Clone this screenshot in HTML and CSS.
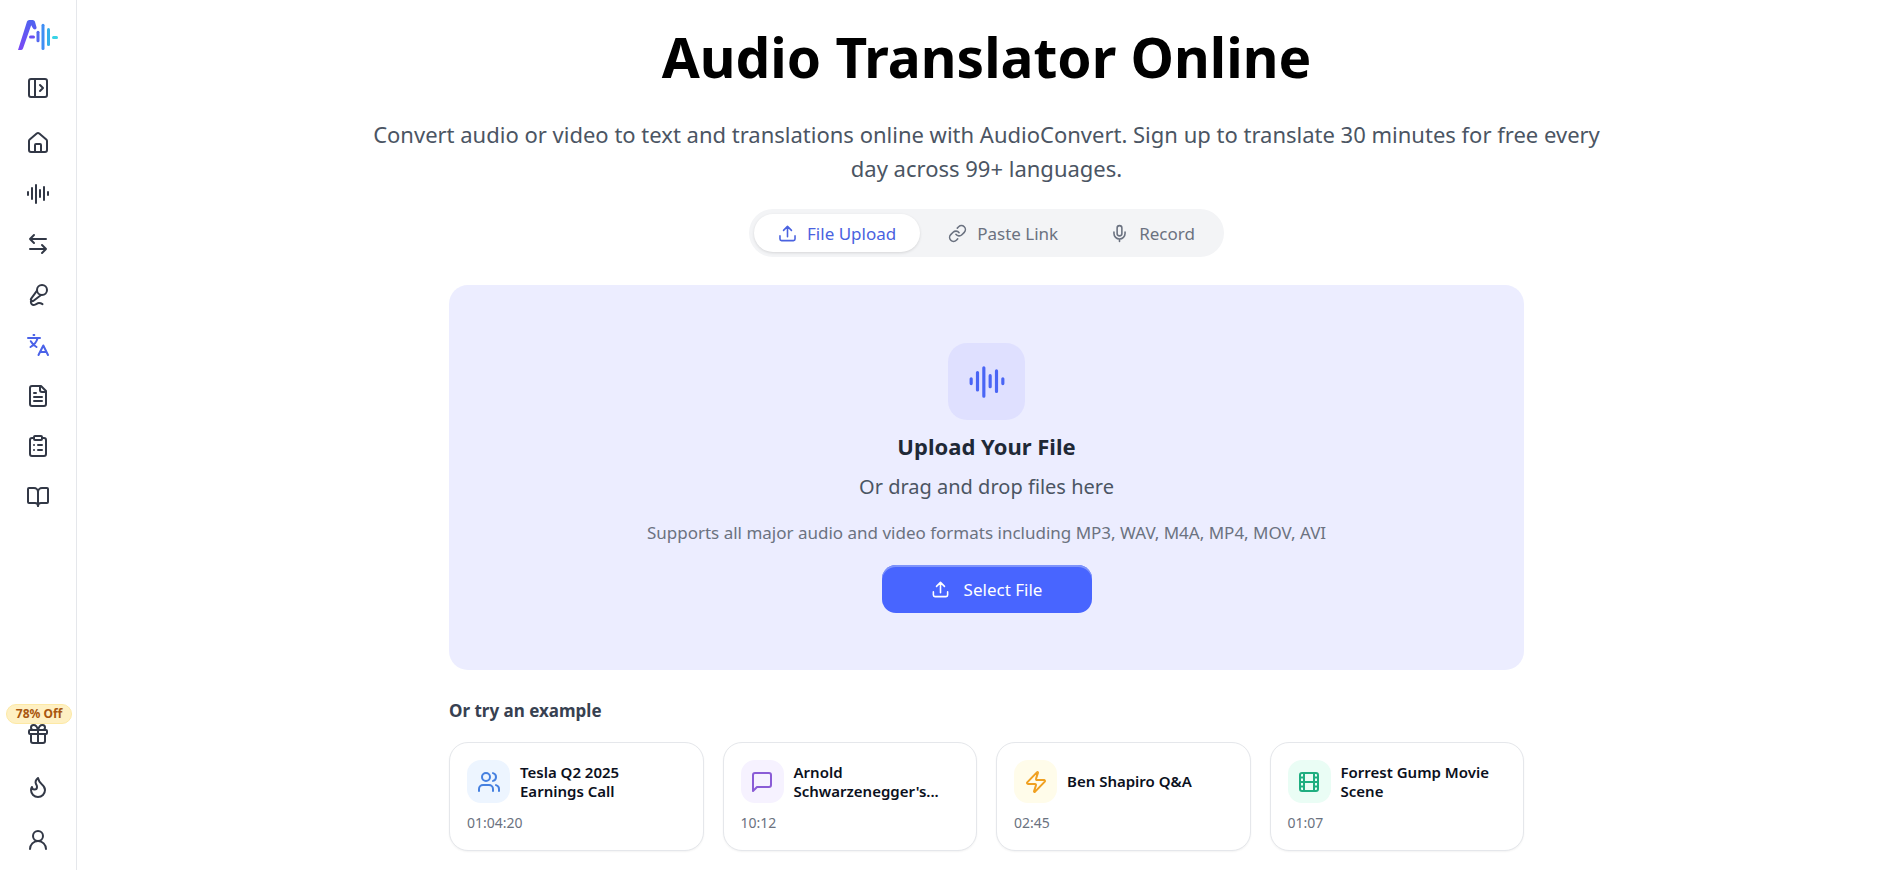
FILE: index.html
```html
<!DOCTYPE html>
<html lang="en">
<head>
<meta charset="utf-8">
<meta name="viewport" content="width=device-width, initial-scale=1">
<title>Audio Translator Online</title>
<link rel="stylesheet" href="styles.css">
</head>
<body>
<div class="app">
  <aside class="sidebar">
    <a class="logo" href="#" aria-label="AudioConvert">
      <svg width="40" height="30" viewBox="0 0 40 30" fill="none" stroke-linecap="round" stroke-linejoin="round">
        <defs>
          <linearGradient id="logo-a" x1="12" y1="0" x2="4" y2="30" gradientUnits="userSpaceOnUse"><stop stop-color="#4f63f0"/><stop offset="1" stop-color="#7a48f5"/></linearGradient>
        </defs>
        <path d="M0 30 9 1.500Q9.600 0 11.200 0H14.800Q16.300 0 16.900 1.600L18.600 7.600Q18.600 9.600 16.800 9.600 15.400 9.600 14.600 7.800L13.200 5.200 5 28.400Q4.400 30 2.800 30Z" fill="url(#logo-a)"/>
        <path d="M12.500 17H15.500" stroke="#6b4ff3" stroke-width="3"/>
        <path d="M20 12.300V20.700" stroke="#5568f0" stroke-width="3"/>
        <path d="M25 5.300V28.500" stroke="#3f8ef4" stroke-width="3"/>
        <path d="M30.500 9.500V24.500" stroke="#35b0ea" stroke-width="3"/>
        <path d="M35.500 17.500H38.500" stroke="#38d3e6" stroke-width="3"/>
      </svg>
    </a>
    <button class="side-btn" type="button" aria-label="Expand sidebar">
      <svg class="icon" viewBox="0 0 24 24"><rect x="3" y="3" width="18" height="18" rx="2"/><path d="M9 3v18"/><path d="m14 9 3 3-3 3"/></svg>
    </button>
    <nav class="nav" aria-label="Tools">
      <a class="side-btn" href="#" aria-label="Home"><svg class="icon" viewBox="0 0 24 24"><path d="M15 21v-7a1 1 0 0 0-1-1h-4a1 1 0 0 0-1 1v7"/><path d="M3 10a2 2 0 0 1 .709-1.528l7-6a2 2 0 0 1 2.582 0l7 6A2 2 0 0 1 21 10v9a2 2 0 0 1-2 2H5a2 2 0 0 1-2-2z"/></svg></a>
      <a class="side-btn" href="#" aria-label="Audio to text"><svg class="icon" viewBox="0 0 24 24"><path d="M2 10v3M6 6v11M10 3v18M14 8v7M18 5v13M22 10v3"/></svg></a>
      <a class="side-btn" href="#" aria-label="Convert"><svg class="icon" viewBox="0 0 24 24"><path d="M8 3 4 7l4 4M4 7h16M16 21l4-4-4-4M20 17H4"/></svg></a>
      <a class="side-btn" href="#" aria-label="Voice"><svg class="icon" viewBox="0 0 24 24"><path d="m11 7.601-5.994 8.190a1 1 0 0 0 .1 1.298l.817.818a1 1 0 0 0 1.314.087L15.090 12"/><path d="M16.500 21.174C15.500 20.500 14.372 20 13 20c-2.058 0-3.928 2.356-6 2-2.072-.356-2.775-3.369-1.500-4.500"/><circle cx="16" cy="7" r="5"/></svg></a>
      <a class="side-btn side-btn-active" href="#" aria-label="Audio translator" aria-current="page"><svg class="icon" viewBox="0 0 24 24" ><path d="M2 5h12M7.500 2h.8M11.500 5.500C10.500 9 8 12 4.500 14M4.800 8.200C6 10.500 8 12.500 10.500 14"/><path d="M12.500 22 17.300 12.500 22 22M14 19h6.500"/></svg></a>
      <a class="side-btn" href="#" aria-label="Transcripts"><svg class="icon" viewBox="0 0 24 24"><path d="M15 2H6a2 2 0 0 0-2 2v16a2 2 0 0 0 2 2h12a2 2 0 0 0 2-2V7Z"/><path d="M14 2v4a2 2 0 0 0 2 2h4M10 9H8M16 13H8M16 17H8"/></svg></a>
      <a class="side-btn" href="#" aria-label="Notes"><svg class="icon" viewBox="0 0 24 24"><rect x="8" y="2" width="8" height="4" rx="1"/><path d="M16 4h2a2 2 0 0 1 2 2v14a2 2 0 0 1-2 2H6a2 2 0 0 1-2-2V6a2 2 0 0 1 2-2h2M12 11h4M12 16h4M8 11h.01M8 16h.01"/></svg></a>
      <a class="side-btn" href="#" aria-label="Guides"><svg class="icon" viewBox="0 0 24 24"><path d="M12 7v14"/><path d="M3 18a1 1 0 0 1-1-1V4a1 1 0 0 1 1-1h5a4 4 0 0 1 4 4 4 4 0 0 1 4-4h5a1 1 0 0 1 1 1v13a1 1 0 0 1-1 1h-6a3 3 0 0 0-3 3 3 3 0 0 0-3-3z"/></svg></a>
    </nav>
    <div class="side-foot">
      <a class="side-btn" href="#">
        <svg class="icon" viewBox="0 0 24 24" aria-hidden="true"><rect x="3" y="8" width="18" height="4" rx="1"/><path d="M12 8v13M19 12v7a2 2 0 0 1-2 2H7a2 2 0 0 1-2-2v-7M7.500 8a2.500 2.500 0 0 1 0-5A4.800 8 0 0 1 12 8a4.800 8 0 0 1 4.500-5 2.500 2.500 0 0 1 0 5"/></svg>
        <span class="badge">78% Off</span>
      </a>
      <a class="side-btn" href="#" aria-label="Popular"><svg class="icon" viewBox="0 0 24 24"><path d="M8.500 14.500A2.500 2.500 0 0 0 11 12c0-1.380-.5-2-1-3-1.072-2.143-.224-4.054 2-6 .5 2.500 2 4.900 4 6.500 2 1.600 3 3.500 3 5.500a7 7 0 1 1-14 0c0-1.153.433-2.294 1-3a2.500 2.500 0 0 0 2.500 2.500z"/></svg></a>
      <a class="side-btn" href="#" aria-label="Account"><svg class="icon" viewBox="0 0 24 24"><circle cx="12" cy="8" r="5"/><path d="M20 21a8 8 0 0 0-16 0"/></svg></a>
    </div>
  </aside>

  <main class="main">
    <h1 class="title">Audio Translator Online</h1>
    <p class="subtitle">Convert audio or video to text and translations online with AudioConvert. Sign up to translate 30 minutes for free every day across 99+ languages.</p>

    <div class="tabs" role="tablist">
      <button class="tab tab-active" type="button" role="tab" aria-selected="true"><svg class="icon icon-sm" viewBox="0 0 24 24"><path d="M12 16V3M7 8l5-5 5 5M2.500 15v4a2 2 0 0 0 2 2h15a2 2 0 0 0 2-2v-4"/></svg>File Upload</button>
      <button class="tab" type="button" role="tab" aria-selected="false"><svg class="icon icon-sm" viewBox="0 0 24 24"><path d="M10 13a5 5 0 0 0 7.540.540l3-3a5 5 0 0 0-7.070-7.070l-1.720 1.710"/><path d="M14 11a5 5 0 0 0-7.540-.540l-3 3a5 5 0 0 0 7.070 7.070l1.710-1.710"/></svg>Paste Link</button>
      <button class="tab" type="button" role="tab" aria-selected="false"><svg class="icon icon-sm" viewBox="0 0 24 24"><rect x="9" y="2" width="6" height="13" rx="3"/><path d="M12 19v3M19 10v2a7 7 0 0 1-14 0v-2"/></svg>Record</button>
    </div>

    <section class="dropzone">
      <div class="drop-tile"><svg class="icon icon-lg" viewBox="0 0 24 24"><path d="M2 10v3M6 6v11M10 3v18M14 8v7M18 5v13M22 10v3"/></svg></div>
      <h2 class="drop-title">Upload Your File</h2>
      <p class="drop-hint">Or drag and drop files here</p>
      <p class="drop-formats">Supports all major audio and video formats including MP3, WAV, M4A, MP4, MOV, AVI</p>
      <button class="select-btn" type="button"><svg class="icon icon-sm" viewBox="0 0 24 24"><path d="M12 16V3M7 8l5-5 5 5M3 15v4a2 2 0 0 0 2 2h14a2 2 0 0 0 2-2v-4"/></svg>Select File</button>
    </section>

    <section class="examples">
      <h3 class="examples-title">Or try an example</h3>
      <div class="cards">
        <a class="card" href="#">
          <span class="card-head"><span class="card-tile tile-blue"><svg class="icon" viewBox="0 0 24 24"><path d="M16 21v-2a4 4 0 0 0-4-4H6a4 4 0 0 0-4 4v2"/><circle cx="9" cy="7" r="4"/><path d="M22 21v-2a4 4 0 0 0-3-3.870M16 3.130a4 4 0 0 1 0 7.750"/></svg></span><span class="card-title">Tesla Q2 2025 Earnings Call</span></span>
          <span class="card-time">01:04:20</span>
        </a>
        <a class="card" href="#">
          <span class="card-head"><span class="card-tile tile-purple"><svg class="icon" viewBox="0 0 24 24"><path d="M21 15a2 2 0 0 1-2 2H7l-4 4V5a2 2 0 0 1 2-2h14a2 2 0 0 1 2 2z"/></svg></span><span class="card-title">Arnold Schwarzenegger's...</span></span>
          <span class="card-time">10:12</span>
        </a>
        <a class="card" href="#">
          <span class="card-head"><span class="card-tile tile-amber"><svg class="icon" viewBox="0 0 24 24"><path d="M4 14a1 1 0 0 1-.780-1.630l9.900-10.200a.5.5 0 0 1 .860.460l-1.920 6.020A1 1 0 0 0 13 10h7a1 1 0 0 1 .780 1.630l-9.900 10.200a.5.5 0 0 1-.860-.460l1.920-6.020A1 1 0 0 0 11 14z"/></svg></span><span class="card-title">Ben Shapiro Q&amp;A</span></span>
          <span class="card-time">02:45</span>
        </a>
        <a class="card" href="#">
          <span class="card-head"><span class="card-tile tile-green"><svg class="icon" viewBox="0 0 24 24"><rect x="3" y="3" width="18" height="18" rx="2"/><path d="M7 3v18M17 3v18M3 7.500h4M3 12h18M3 16.500h4M17 7.500h4M17 16.500h4"/></svg></span><span class="card-title">Forrest Gump Movie Scene</span></span>
          <span class="card-time">01:07</span>
        </a>
      </div>
    </section>
  </main>
</div>
</body>
</html>
```

FILE: styles.css
```css
* { box-sizing: border-box; }

body {
  margin: 0;
  background: #fff;
  color: #111827;
  font-family: "Noto Sans", "Open Sans", sans-serif;
}

h1, h2, h3, p { margin: 0; }
a { color: inherit; text-decoration: none; }
button { font-family: inherit; cursor: pointer; border: 0; background: none; padding: 0; }

.app { display: flex; min-height: 100vh; }

.icon {
  width: 24px;
  height: 24px;
  flex: none;
  fill: none;
  stroke: currentColor;
  stroke-width: 2;
  stroke-linecap: round;
  stroke-linejoin: round;
}
.icon-sm { width: 19px; height: 19px; }
.icon-lg { width: 38px; height: 38px; }

/* Sidebar */
.sidebar {
  width: 77px;
  flex: none;
  height: 100vh;
  position: sticky;
  top: 0;
  display: flex;
  flex-direction: column;
  align-items: center;
  padding: 20px 0 10px;
  border-right: 1px solid #e5e7eb;
}
.logo { display: flex; margin-bottom: 18px; }
.side-btn {
  position: relative;
  width: 40px;
  height: 40px;
  display: flex;
  align-items: center;
  justify-content: center;
  color: #323846;
}
.side-btn-active { color: #4a62e8; }
.nav {
  display: grid;
  grid-auto-rows: 1fr;
  align-items: center;
  height: 404px;
  margin-top: 10px;
}
.side-foot {
  display: flex;
  flex-direction: column;
  gap: 13px;
  margin-top: auto;
}
.badge {
  position: absolute;
  top: -10px;
  left: -12px;
  width: 66px;
  padding: 1px 0;
  border: 1px solid #fde9a5;
  border-radius: 10px;
  background: #fef0c3;
  color: #a8560f;
  font-size: 12px;
  line-height: 16px;
  font-weight: 700;
  text-align: center;
  white-space: nowrap;
}

/* Main column */
.main {
  flex: 1;
  min-width: 0;
  display: flex;
  flex-direction: column;
  align-items: center;
  padding: 18px 16px 19px 19px;
}
.title {
  font-size: 55px;
  line-height: 78px;
  font-weight: 700;
  color: #000;
  text-align: center;
}
.subtitle {
  max-width: 1244px;
  margin-top: 21px;
  font-size: 22px;
  line-height: 34px;
  color: #4b5563;
  text-align: center;
}

.tabs {
  display: flex;
  gap: 4px;
  margin-top: 24px;
  padding: 5px;
  border-radius: 24px;
  background: #f3f4f6;
}
.tab {
  display: flex;
  align-items: center;
  gap: 10px;
  height: 38px;
  padding: 0 24px;
  border-radius: 19px;
  color: #6b7280;
  font-size: 17px;
}
.tab-active {
  background: #fff;
  color: #4a62e0;
  box-shadow: 0 1px 3px rgba(0, 0, 0, 0.12);
}

.dropzone {
  width: 100%;
  max-width: 1075px;
  margin-top: 28px;
  padding: 58px 24px 57px;
  display: flex;
  flex-direction: column;
  align-items: center;
  border-radius: 19px;
  background: #ecedff;
  text-align: center;
}
.drop-tile {
  width: 77px;
  height: 77px;
  display: flex;
  align-items: center;
  justify-content: center;
  border-radius: 19px;
  background: #dfe0ff;
  color: #4a65f5;
}
.drop-title {
  margin-top: 10px;
  font-size: 22px;
  line-height: 32px;
  font-weight: 700;
  color: #1f2937;
}
.drop-hint {
  margin-top: 10px;
  font-size: 20px;
  line-height: 30px;
  color: #4b5563;
}
.drop-formats {
  margin-top: 16px;
  font-size: 17px;
  line-height: 30px;
  color: #6b7280;
}
.select-btn {
  display: flex;
  align-items: center;
  justify-content: center;
  gap: 14px;
  width: 210px;
  height: 48px;
  margin-top: 17px;
  border-radius: 14px;
  background: #4865ff;
  box-shadow: inset 0 2px 0 #7f94fb;
  color: #fff;
  font-size: 17px;
}

.examples { width: 100%; max-width: 1075px; margin-top: 27px; }
.examples-title {
  font-size: 17px;
  line-height: 28px;
  font-weight: 700;
  color: #374151;
}
.cards {
  display: grid;
  grid-template-columns: repeat(4, 1fr);
  gap: 19px;
  margin-top: 17px;
}
.card {
  display: flex;
  flex-direction: column;
  gap: 9px;
  padding: 17px;
  border: 1px solid #e5e7eb;
  border-radius: 19px;
  background: #fff;
  box-shadow: 0 1px 2px rgba(0, 0, 0, 0.05);
}
.card-head { display: flex; align-items: center; gap: 10px; }
.card-tile {
  width: 43px;
  height: 43px;
  flex: none;
  display: flex;
  align-items: center;
  justify-content: center;
  border-radius: 14px;
}
.tile-blue { background: #edf5ff; color: #4580e0; }
.tile-purple { background: #f6f2ff; color: #8a5cd6; }
.tile-amber { background: #fffcea; color: #f0a020; }
.tile-green { background: #eafdf5; color: #1fae80; }
.card-title {
  font-size: 15px;
  line-height: 19px;
  font-weight: 600;
  color: #0b1020;
}
.card-time {
  font-size: 14px;
  line-height: 21px;
  color: #6b7280;
}
```
